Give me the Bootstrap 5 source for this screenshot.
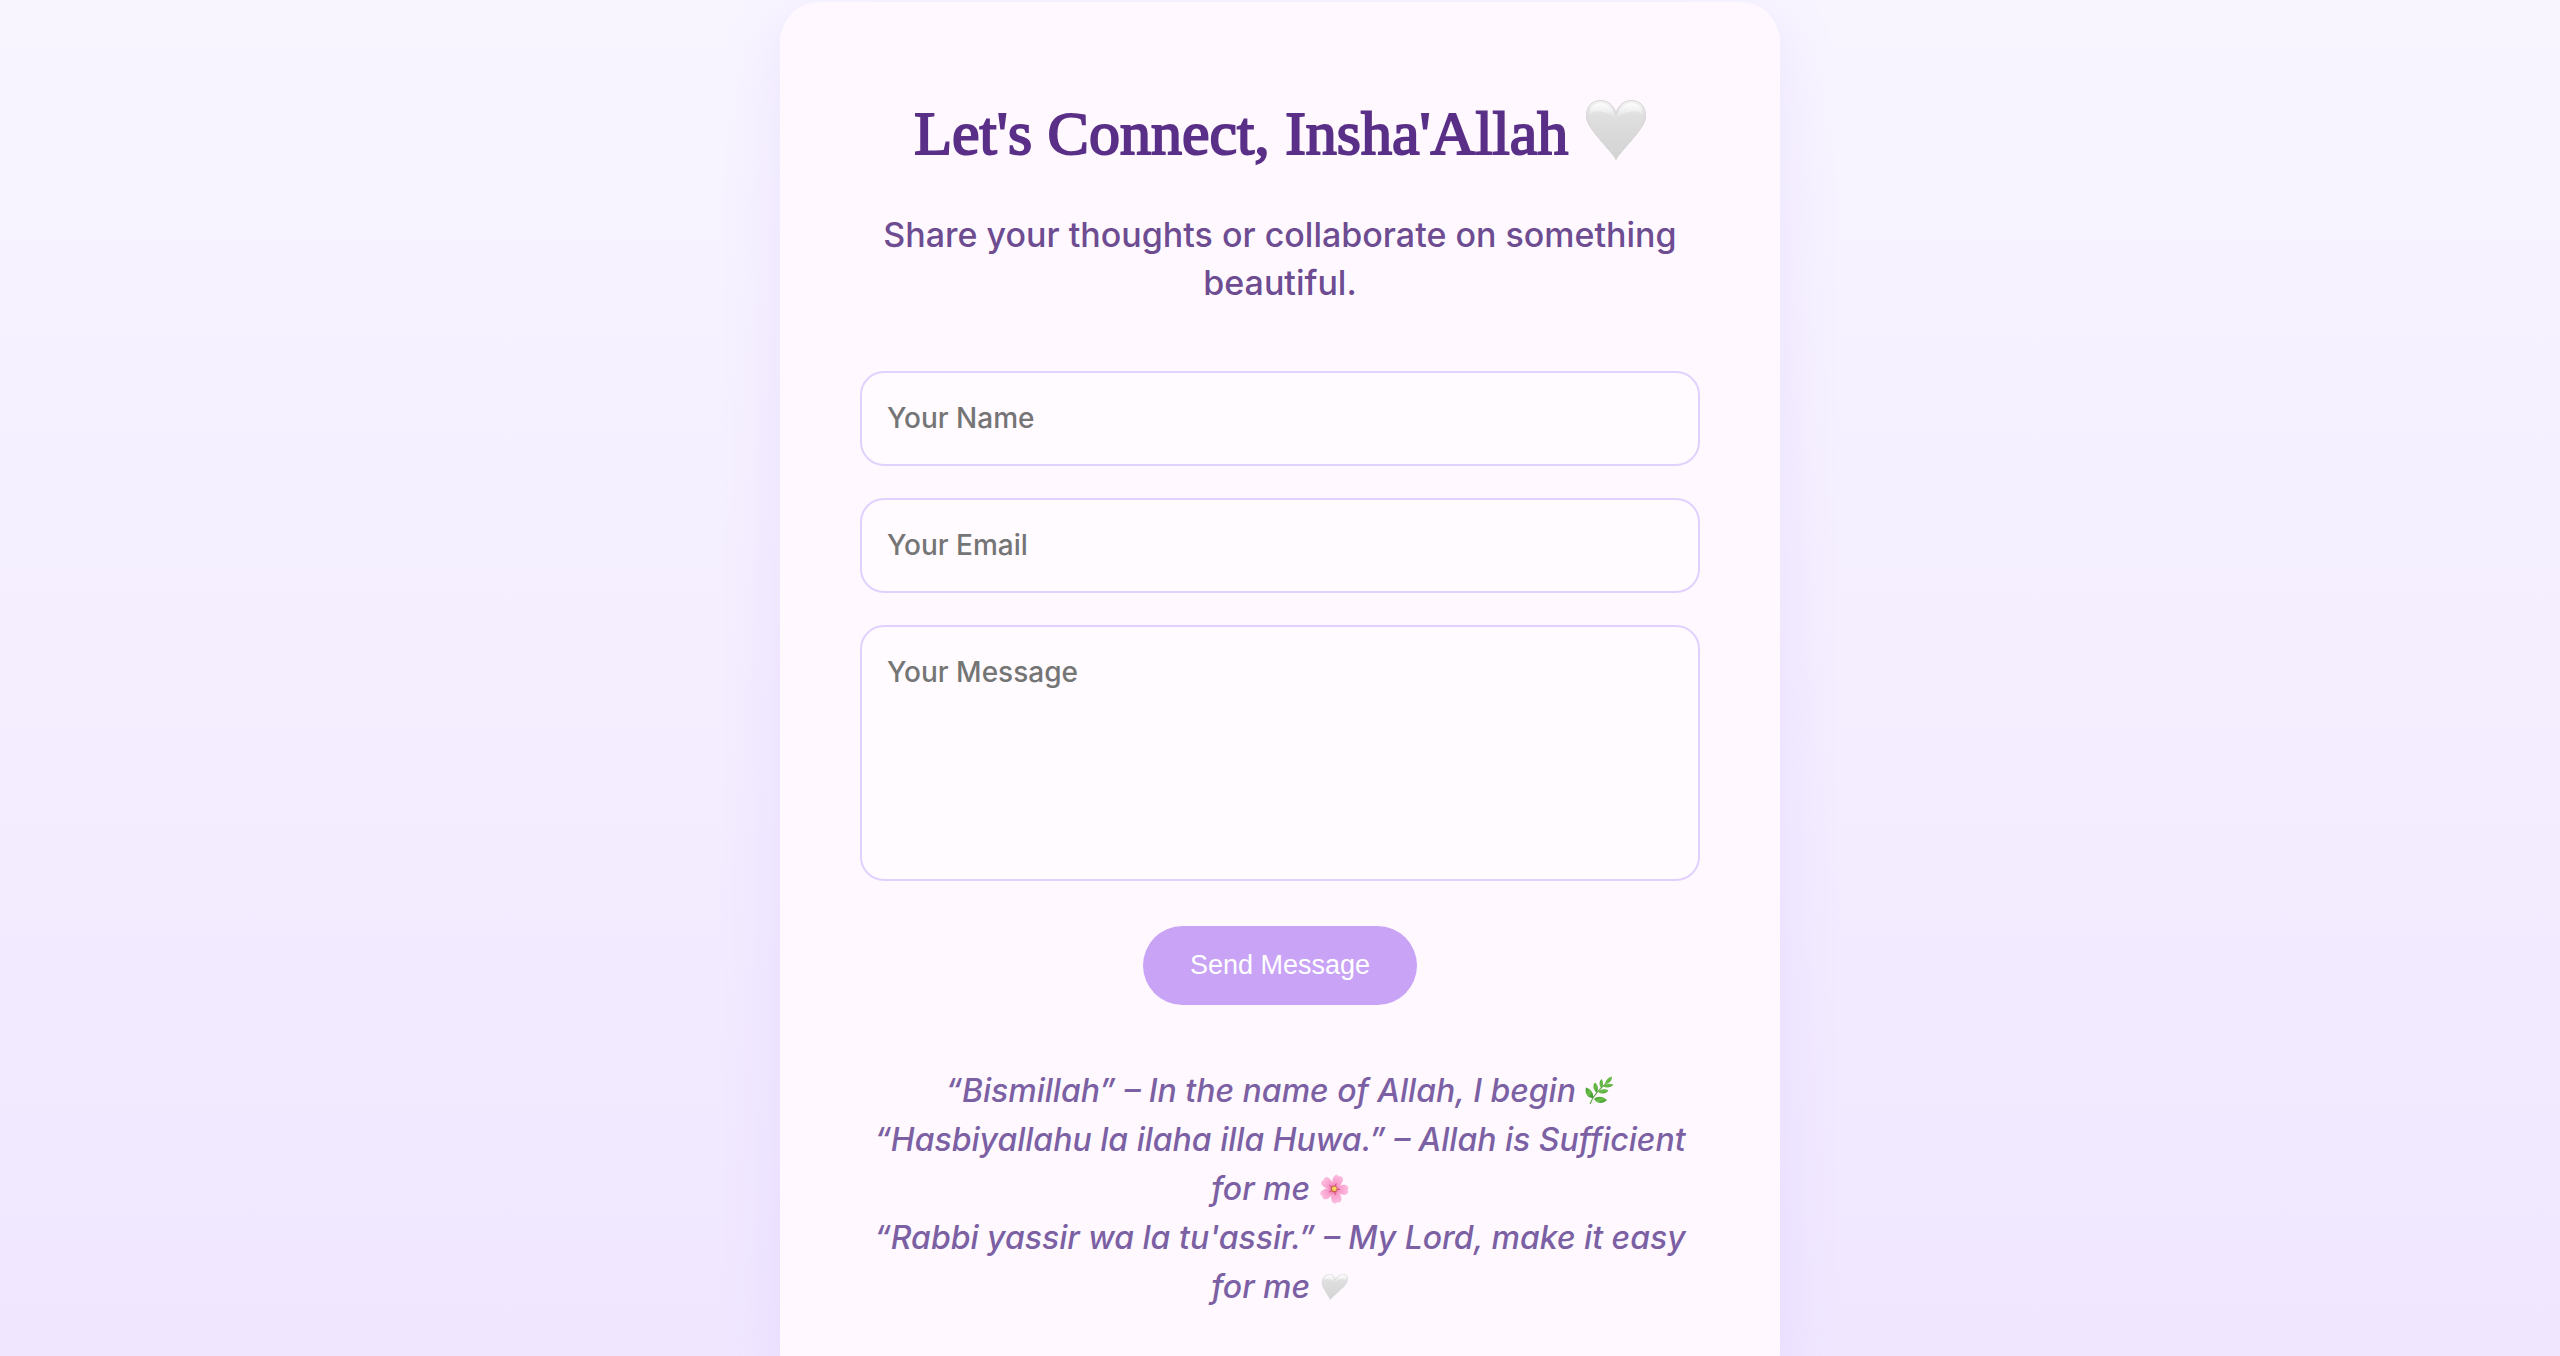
<!DOCTYPE html>
<html lang="en">
<head>
<meta charset="utf-8">
<meta name="viewport" content="width=device-width, initial-scale=1">
<title>Let's Connect</title>
<link href="https://cdn.jsdelivr.net/npm/bootstrap@5.3.0/dist/css/bootstrap.min.css" rel="stylesheet">
<style>
body { font-family: Inter, "Open Sans", sans-serif; font-weight: 500; background: #f8f6ff; }
.page-scroll { background: linear-gradient(180deg, #f8f5ff 0%, #f0e7ff 100%); scrollbar-width: none; padding-top: 2px; }
.contact-panel { max-width: 1000px; padding: 89px 80px 80px; border-radius: 40px; background: #fff9ff; box-shadow: 0 16px 60px rgba(180, 145, 255, .16); }
.contact-title { font-family: "Liberation Serif", serif; font-weight: 400; font-size: 62px; line-height: 84px; color: #5a2f87; -webkit-text-stroke: 2px #5a2f87; margin-bottom: 36px; }
.contact-intro { font-size: 34px; line-height: 48px; color: #6d4c91; margin-bottom: 64px; }
.contact-form { gap: 32px; }
.contact-field { font-size: 28px; font-weight: 500; line-height: 39px; padding: 26px 25px; border: 2px solid #e0d1ff; border-radius: 24px; background: #fffbff; resize: none; }
textarea.contact-field { min-height: 256px; }
.contact-field:focus { background: #fffbff; border-color: #c9a3f5; box-shadow: none; }
.contact-field::placeholder { color: #757575; }
.contact-send { font-family: "Liberation Sans", Arial, sans-serif; font-size: 27px; line-height: 31px; padding: 24px 47px; color: #fff; background: #c9a3f5; border: 0; margin-top: 13px; }
.contact-send:hover { color: #fff; background: #b98cec; }
.contact-duas { font-size: 32px; line-height: 49px; font-style: italic; color: #7b60a4; margin-top: 61px; }
.title-heart { width: 60px; height: 60px; vertical-align: -6px; margin-left: 2px; }
.dua-icon { width: 30px; height: 30px; vertical-align: -4px; }
</style>
<script defer src="https://cdn.jsdelivr.net/npm/bootstrap@5.3.0/dist/js/bootstrap.bundle.min.js"></script>
</head>
<body>
<svg width="0" height="0" class="position-absolute" aria-hidden="true">
  <defs>
    <linearGradient id="heartFill" x1="0" y1="0" x2="0" y2="1">
      <stop offset="0" stop-color="#f4f4f4"/><stop offset=".25" stop-color="#dfdfdf"/><stop offset="1" stop-color="#d3d3d3"/>
    </linearGradient>
    <linearGradient id="heartShine" x1="0" y1="0" x2="0" y2="1">
      <stop offset="0" stop-color="#fff" stop-opacity=".8"/><stop offset="1" stop-color="#fff" stop-opacity="0"/>
    </linearGradient>
    <radialGradient id="petalFill" gradientUnits="userSpaceOnUse" cx="15" cy="15" r="15">
      <stop offset="0" stop-color="#d9447c"/><stop offset=".35" stop-color="#f799c8"/><stop offset="1" stop-color="#ffc0e4"/>
    </radialGradient>
    <linearGradient id="leafFill" x1="0" y1="0" x2="1" y2="1">
      <stop offset="0" stop-color="#3f9a2c"/><stop offset=".5" stop-color="#6cc04a"/><stop offset="1" stop-color="#2f8524"/>
    </linearGradient>
  </defs>
  <symbol id="heart" viewBox="0 0 60 60">
    <path d="M30 59.500C28 55 19 46 11 36C4 27 .5 22 .5 15.500C.5 6.500 6 .5 14.500 .5C22 .5 28 5.500 30 13.500C32 5.500 38 .5 45.500 .5C54 .5 59.500 6.500 59.500 15.500C59.500 22 56 27 49 36C41 46 32 55 30 59.500Z" fill="url(#heartFill)" stroke="#d2d2d2" stroke-width="1"/>
    <path d="M3.500 14C4 6.500 9 3 14.500 3C21 3 26 8 29 16H31C34 8 39 3 45.500 3C51 3 56 6.500 56.500 14C50 9 40 11 30 19C20 11 10 9 3.500 14Z" fill="url(#heartShine)"/>
  </symbol>
  <symbol id="flower" viewBox="0 0 30 30">
    <g transform="rotate(22 15 15)">
      <g fill="url(#petalFill)" stroke="#f0a0cc" stroke-width=".4">
        <path id="petal" d="M15 16C12 12 9.500 7.500 10.500 3.500C11.300 .8 13.500 .3 15 1.800C16.500 .3 19 .8 19.700 3.500C20.500 7.500 18 12 15 16Z"/>
        <use href="#petal" transform="rotate(72 15 15)"/><use href="#petal" transform="rotate(144 15 15)"/>
        <use href="#petal" transform="rotate(216 15 15)"/><use href="#petal" transform="rotate(288 15 15)"/>
      </g>
      <path d="M15 15V9M15 15L20.700 13.200M15 15L18.500 19.900M15 15L11.500 19.900M15 15L9.300 13.200" stroke="#c93473" stroke-width=".7" fill="none"/>
    </g>
    <circle cx="15" cy="15" r="3.200" fill="#c9664a"/><circle cx="15.300" cy="14.700" r="2.300" fill="#f6d55c"/>
  </symbol>
  <symbol id="herb" viewBox="0 0 30 30">
    <path d="M6 28C9 20 16 12 25 5" stroke="#6aa84f" stroke-width="1.200" fill="none"/>
    <g fill="url(#leafFill)">
      <path d="M9 22C3 22 .5 17 2 11.500C7 13 10 17 9 22Z"/>
      <path d="M12.500 16.500C9 14 8.500 9.500 11 6.500C14 9 15 13 12.500 16.500Z"/>
      <path d="M17 12C15 9 15 5.500 17.500 3C19.500 5.500 19.500 9 17 12Z"/>
      <path d="M21 8C21.500 4 24 1.500 28 .5C28 4.500 25.500 7.500 21 8Z"/>
      <path d="M19 10.500C22 7.500 26 7 29.500 8.500C27 11.500 23 12.500 19 10.500Z"/>
      <path d="M14 16C17 12.500 21.500 12.500 24.500 14.500C22 18 18 18.500 14 16Z"/>
      <path d="M10 23C13 19.500 19.500 20 23 24C19 28 13 28 10 23Z"/>
    </g>
  </symbol>
</svg>

<main class="page-scroll vh-100 overflow-auto">
  <section class="contact-panel w-100 mx-auto text-center">
    <h1 class="contact-title">Let's Connect, Insha'Allah <svg class="title-heart" role="img" aria-label="White heart"><use href="#heart" stroke-width="0"/></svg></h1>
    <p class="contact-intro">Share your thoughts or collaborate on something beautiful.</p>
    <form class="contact-form d-flex flex-column">
      <input class="contact-field form-control" type="text" placeholder="Your Name" aria-label="Your Name">
      <input class="contact-field form-control" type="email" placeholder="Your Email" aria-label="Your Email">
      <textarea class="contact-field form-control" rows="5" placeholder="Your Message" aria-label="Your Message"></textarea>
      <button class="contact-send btn rounded-pill align-self-center" type="submit">Send Message</button>
    </form>
    <p class="contact-duas mb-0">
      “Bismillah” – In the name of Allah, I begin <svg class="dua-icon" role="img" aria-label="Herb"><use href="#herb"/></svg><br>
      “Hasbiyallahu la ilaha illa Huwa.” – Allah is Sufficient for me <svg class="dua-icon" role="img" aria-label="Blossom"><use href="#flower"/></svg><br>
      “Rabbi yassir wa la tu'assir.” – My Lord, make it easy for me <svg class="dua-icon" role="img" aria-label="White heart"><g transform="skewX(-14)"><use href="#heart" x="5" y="2" width="26" height="26"/></g></svg>
    </p>
  </section>
</main>
</body>
</html>
